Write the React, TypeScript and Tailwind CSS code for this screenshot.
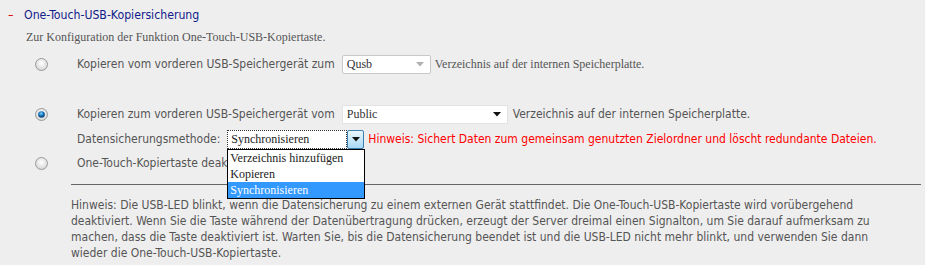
import React from 'react';

const sans = "font-['DejaVu_Sans_Condensed','Liberation_Sans',sans-serif]";
const serif = "font-['Liberation_Serif','Times_New_Roman',serif]";

const Radio = ({ checked = false }: { checked?: boolean }) => (
  <svg width="13" height="13" viewBox="0 0 13 13" className="shrink-0">
    <defs>
      <radialGradient id="rg-off" cx="50%" cy="40%" r="60%">
        <stop offset="0%" stopColor="#ffffff" />
        <stop offset="100%" stopColor="#d4d4d4" />
      </radialGradient>
      <radialGradient id="rg-on" cx="45%" cy="35%" r="60%">
        <stop offset="0%" stopColor="#7fd0ff" />
        <stop offset="60%" stopColor="#1070b8" />
        <stop offset="100%" stopColor="#0a3d6e" />
      </radialGradient>
    </defs>
    <circle cx="6.5" cy="6.5" r="6" fill="url(#rg-off)" stroke="#9a9a9a" strokeWidth="1" />
    {checked && <circle cx="6.5" cy="6.5" r="3.3" fill="url(#rg-on)" />}
  </svg>
);

const Arrow = ({ color }: { color: string }) => (
  <svg width="8" height="5" viewBox="0 0 8 5">
    <path d="M0 0 L8 0 L4 4.5 Z" fill={color} />
  </svg>
);

const App = () => {
  return (
    <div className={`w-[925px] h-[265px] bg-[#eeeeee] overflow-hidden ${sans}`}>
      {/* header */}
      <div className="flex items-center h-4 mt-[7px] pl-[8px] text-[12.2px]">
        <span className="text-[#e00000] w-4">–</span>
        <span className="text-[#10208a]">One-Touch-USB-Kopiersicherung</span>
      </div>

      <div className={`${serif} text-[12px] text-[#555555] h-4 leading-4 mt-[6px] pl-[26px]`}>
        Zur Konfiguration der Funktion One-Touch-USB-Kopiertaste.
      </div>

      <div className="pl-[35px] text-[12px] text-[#555555]">
        {/* option 1 */}
        <div className="flex items-center h-5 mt-[9px]">
          <Radio />
          <span className="ml-[29px]">Kopieren vom vorderen USB-Speichergerät zum</span>
          <div className="ml-[7px] w-[89px] h-[19px] bg-white border border-[#c8c8c8] rounded-[2px] flex items-center justify-between pl-[4px] pr-[6px]">
            <span className={`${serif} text-[12px] text-[#333333]`}>Qusb</span>
            <Arrow color="#b0b0b0" />
          </div>
          <span className={`${serif} text-[12px] ml-[4px]`}>Verzeichnis auf der internen Speicherplatte.</span>
        </div>

        {/* option 2 */}
        <div className="flex items-center h-5 mt-[30px]">
          <Radio checked />
          <span className="ml-[29px]">Kopieren zum vorderen USB-Speichergerät vom</span>
          <div className="ml-[7px] w-[166px] h-[19px] bg-white border border-[#e2e2e2] flex items-center justify-between pl-[4px] pr-[6px]">
            <span className={`${serif} text-[12px] text-[#333333]`}>Public</span>
            <Arrow color="#111111" />
          </div>
          <span className="ml-[5px]">Verzeichnis auf der internen Speicherplatte.</span>
        </div>

        {/* backup method */}
        <div className="relative flex items-center h-5 mt-[5px] pl-[42px]">
          <span>Datensicherungsmethode:</span>
          <div className="relative ml-[7px] w-[137px] h-[19px] flex">
            <div className="flex-1 bg-white border border-dotted border-[#333333] flex items-center pl-[3px]">
              <span className={`${serif} text-[12px] text-[#222222]`}>Synchronisieren</span>
            </div>
            <div className="w-[17px] h-full border border-[#3c7fb1] rounded-[2px] bg-gradient-to-b from-[#eaf6fd] to-[#a7d9f5] flex items-center justify-center">
              <Arrow color="#111111" />
            </div>
            <div className={`absolute left-0 top-[19px] w-[138px] bg-white border border-black ${serif} text-[12px] text-[#222222] z-10`}>
              <div className="h-4 leading-4 pl-[2px]">Verzeichnis hinzufügen</div>
              <div className="h-4 leading-4 pl-[2px]">Kopieren</div>
              <div className="h-4 leading-4 pl-[2px] bg-[#3399ff] text-white">Synchronisieren</div>
            </div>
          </div>
          <span className="ml-[4px] text-[#ff0000]">
            Hinweis: Sichert Daten zum gemeinsam genutzten Zielordner und löscht redundante Dateien.
          </span>
        </div>

        {/* option 3 */}
        <div className="flex items-center h-5 mt-[4px]">
          <Radio />
          <span className="ml-[29px]">One-Touch-Kopiertaste deaktivieren</span>
        </div>
      </div>

      <div className="ml-[71px] mr-[4px] mt-[11px] border-t border-[#666666]" />

      <p className="ml-[71px] mt-[12px] text-[12px] leading-4 text-[#555555] whitespace-nowrap">
        Hinweis: Die USB-LED blinkt, wenn die Datensicherung zu einem externen Gerät stattfindet. Die One-Touch-USB-Kopiertaste wird vorübergehend
        <br />
        deaktiviert. Wenn Sie die Taste während der Datenübertragung drücken, erzeugt der Server dreimal einen Signalton, um Sie darauf aufmerksam zu
        <br />
        machen, dass die Taste deaktiviert ist. Warten Sie, bis die Datensicherung beendet ist und die USB-LED nicht mehr blinkt, und verwenden Sie dann
        <br />
        wieder die One-Touch-USB-Kopiertaste.
      </p>
    </div>
  );
};

export default App;
